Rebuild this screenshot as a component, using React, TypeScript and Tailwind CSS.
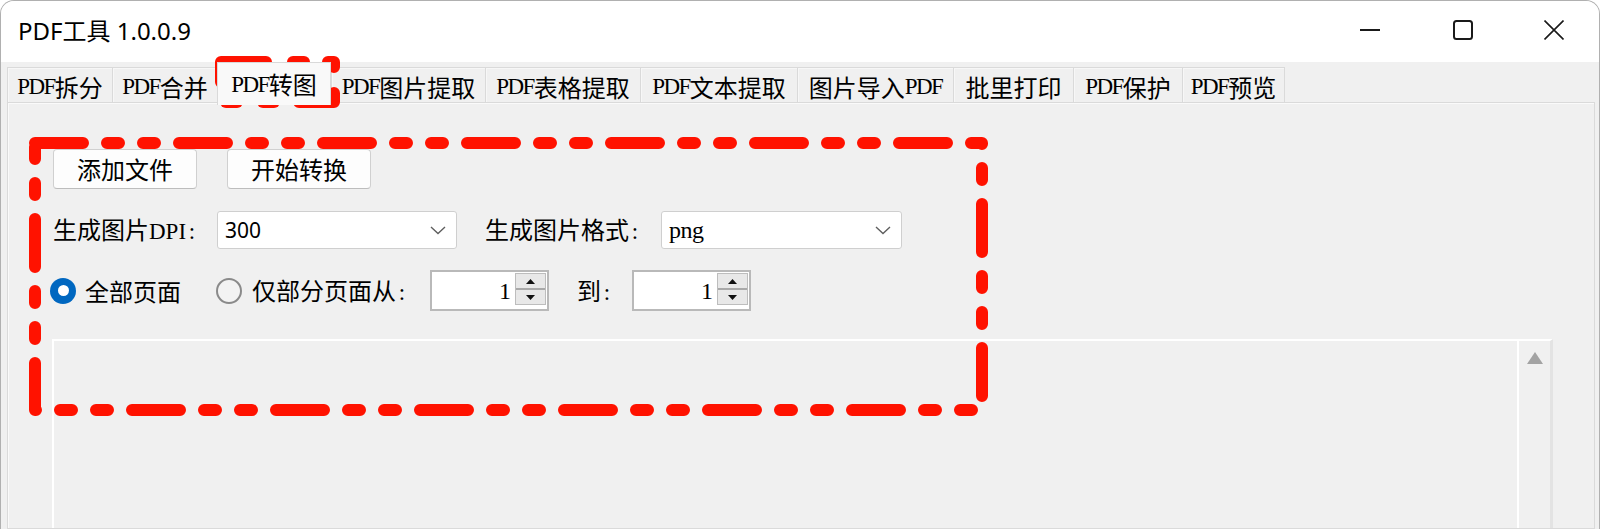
import React from 'react';

// latin runs inside the old Windows UI font look like a narrow serif
function L({ children }: { children: React.ReactNode }) {
  return <span className="font-['Liberation_Serif',serif] text-[23px] tracking-[-1.5px]">{children}</span>;
}

// half-width colon, SimSun style
function Colon() {
  return <span className="inline-block w-[12px] text-center font-['Liberation_Serif',serif] text-[23px]">:</span>;
}

const tabs: { label: React.ReactNode; w: string; active?: boolean }[] = [
  { label: <><L>PDF</L>拆分</>, w: 'w-[105px]' },
  { label: <><L>PDF</L>合并</>, w: 'w-[105px]' },
  { label: <><L>PDF</L>转图</>, w: 'w-[114px]', active: true },
  { label: <><L>PDF</L>图片提取</>, w: 'w-[154px]' },
  { label: <><L>PDF</L>表格提取</>, w: 'w-[155px]' },
  { label: <><L>PDF</L>文本提取</>, w: 'w-[157px]' },
  { label: <>图片导入<L>PDF</L></>, w: 'w-[156px]' },
  { label: <>批里打印</>, w: 'w-[120px]' },
  { label: <><L>PDF</L>保护</>, w: 'w-[109px]' },
  { label: <><L>PDF</L>预览</>, w: 'w-[103px]' },
];

function Chevron() {
  return (
    <svg width="16" height="9" viewBox="0 0 16 9" className="ml-auto mr-[10px]">
      <path d="M1 1 L8 7.5 L15 1" fill="none" stroke="#5f5f5f" strokeWidth="1.4" />
    </svg>
  );
}

function Select({ w, children }: { w: string; children: React.ReactNode }) {
  return (
    <div className={`${w} h-[38px] flex items-center rounded-[3px] border border-[#cfcfcf] bg-white pl-[7px]`}>
      {children}
      <Chevron />
    </div>
  );
}

function Radio({ checked }: { checked?: boolean }) {
  if (checked) {
    return (
      <span className="w-[26px] h-[26px] rounded-full bg-[#0067c0] flex items-center justify-center shrink-0">
        <span className="w-[11px] h-[11px] rounded-full bg-white" />
      </span>
    );
  }
  return <span className="w-[26px] h-[26px] rounded-full border-2 border-[#8a8a8a] bg-[#f3f3f3] shrink-0" />;
}

function Numeric() {
  return (
    <div className="w-[119px] h-[41px] border-2 border-[#b9b9b9] bg-white flex items-start pt-[1px]">
      <span className="flex-1 text-right pr-[4px] pt-[2px] font-['Liberation_Serif',serif] text-[24px] leading-[32px]">1</span>
      <div className="w-[31px] h-[32px] mr-[1px] flex flex-col border border-[#bdbdbd] bg-[#e8e8e8]">
        <div className="flex-1 flex items-center justify-center border-b-2 border-[#a9a9a9]">
          <svg width="9" height="5" viewBox="0 0 9 5"><path d="M0 5 L4.5 0 L9 5 Z" fill="#111" /></svg>
        </div>
        <div className="flex-1 flex items-center justify-center">
          <svg width="9" height="5" viewBox="0 0 9 5"><path d="M0 0 L4.5 5 L9 0 Z" fill="#111" /></svg>
        </div>
      </div>
    </div>
  );
}

export default function App() {
  return (
    <div className="relative w-[1600px] h-[529px] overflow-hidden bg-white font-['Noto_Sans_CJK_SC',sans-serif] text-black text-[24px] leading-none">
      <div className="h-full flex flex-col rounded-t-[14px] border-x border-t border-[#b0b0b0] bg-[#f0f0f0] overflow-hidden">

        {/* title bar */}
        <div className="h-[61px] shrink-0 bg-white flex items-center">
          <span className="pl-[17px] pb-[2px] text-[24px] font-['Noto_Sans','Noto_Sans_CJK_SC',sans-serif]">PDF工具 1.0.0.9</span>
          <div className="ml-auto h-full flex items-center pb-[3px]">
            <div className="w-[92px] flex justify-center">
              <svg width="20" height="20" viewBox="0 0 20 20"><path d="M0 10 H20" stroke="#1a1a1a" strokeWidth="2" /></svg>
            </div>
            <div className="w-[93px] flex justify-center">
              <svg width="20" height="20" viewBox="0 0 20 20"><rect x="1" y="1" width="18" height="18" rx="2.5" fill="none" stroke="#1a1a1a" strokeWidth="2" /></svg>
            </div>
            <div className="w-[90px] flex justify-center">
              <svg width="20" height="20" viewBox="0 0 20 20"><path d="M0.5 0.5 L19.5 19.5 M19.5 0.5 L0.5 19.5" stroke="#1a1a1a" strokeWidth="1.6" /></svg>
            </div>
          </div>
        </div>

        {/* tab headers */}
        <div className="h-[40px] shrink-0 flex items-end pl-[6px]">
          {tabs.map((t, i) =>
            t.active ? (
              <div key={i} className={`${t.w} h-[43px] -mb-[3px] relative z-10 flex items-center justify-center bg-[#f9f9f9] border-x border-t border-[#d9d9d9]`}>
                {t.label}
              </div>
            ) : (
              <div key={i} className={`${t.w} h-[35px] flex items-center justify-center pt-[3px] bg-[#f0f0f0] border-l border-t border-[#dadada] shadow-[inset_1px_1px_0_#f7f7f7] last:border-r`}>
                {t.label}
              </div>
            )
          )}
        </div>

        {/* tab page */}
        <div className="flex-1 ml-[6px] mr-[4px] border border-[#dadada] shadow-[inset_1px_1px_0_#fafafa] bg-[#f0f0f0] pl-[45px] pt-[46px] flex flex-col">
          <div className="flex gap-[30px]">
            <button className="w-[144px] h-[40px] rounded-[4px] border border-[#d0d0d0] border-b-[#bdbdbd] bg-[#fdfdfd]">添加文件</button>
            <button className="w-[144px] h-[40px] rounded-[4px] border border-[#d0d0d0] border-b-[#bdbdbd] bg-[#fdfdfd]">开始转换</button>
          </div>

          <div className="mt-[22px] flex items-center">
            <span className="w-[164px]">生成图片<span className="font-['Liberation_Serif',serif] text-[23px]">DPI</span><Colon /></span>
            <Select w="w-[240px]">
              <span className="font-['Noto_Sans',sans-serif] text-[21px]">300</span>
            </Select>
            <span className="ml-[28px] w-[176px]">生成图片格式<Colon /></span>
            <Select w="w-[241px]">
              <span className="font-['Liberation_Serif',serif] text-[24px] tracking-[-0.5px]">png</span>
            </Select>
          </div>

          <div className="mt-[21px] flex items-center">
            <span className="-ml-[3px]"><Radio checked /></span>
            <span className="ml-[9px] w-[131px]">全部页面</span>
            <Radio />
            <span className="ml-[10px] w-[178px]">仅部分页面从<Colon /></span>
            <Numeric />
            <span className="ml-[28px] w-[55px]">到<Colon /></span>
            <Numeric />
          </div>

          {/* output list */}
          <div className="mt-[28px] -ml-[1px] w-[1501px] flex-1 flex border-t-2 border-l-2 border-white border-r-[3px] border-r-[#e3e3e3]">
            <div className="flex-1" />
            <div className="w-[33px] border-l-2 border-white flex justify-center pt-[11px]">
              <svg width="16" height="12" viewBox="0 0 16 12"><path d="M8 0 L16 12 L0 12 Z" fill="#a3a3a3" /></svg>
            </div>
          </div>
        </div>
      </div>

      {/* red dashed annotations */}
      <svg className="absolute inset-0 pointer-events-none" width="1600" height="529">
        <g fill="none" stroke="#ff1200" strokeWidth="12" strokeLinecap="round" strokeLinejoin="round">
          <rect x="35" y="143" width="947" height="267" strokeDasharray="48 24 12 24 12 24" />
          <path d="M221 82 V62 H266" />
          <path d="M293 62 H304" />
          <path d="M328 62 H334 V67" />
          <path d="M334 93 V102 H299" />
          <path d="M263 102 H274" />
          <path d="M226 102 H237" />
        </g>
      </svg>
    </div>
  );
}
